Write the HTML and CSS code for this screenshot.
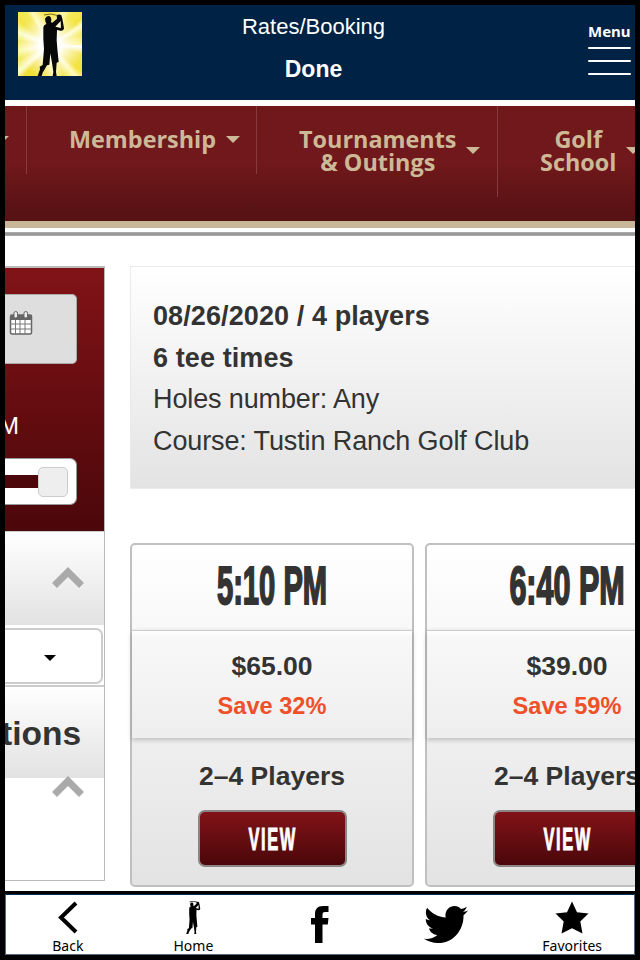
FILE: index.html
```html
<!DOCTYPE html>
<html lang="en">
<head>
  <meta charset="UTF-8" />
  <meta name="viewport" content="width=device-width, initial-scale=1.0"/>
  <title>Rates/Booking</title>
  <link rel="stylesheet" href="styles.css">
</head>
<body>
  <div class="app">
    <header class="top-bar">
      <div class="logo">
        <svg viewBox="0 0 192 192">
          <path d="M78 9l20-3 24 5" fill="none" stroke="#776d20" stroke-width="3"/>
          <path d="M81 20q5-10 14-7q7 5 4 18l4 1l14-12l-1-9q7-6 14-1l3 10l5 28q-1 9-10 8l-11-2l-1 31l2 25l4 40l-6 2l-2 28l2 12h-12l2-12l-4-28l-5-28l-3 34l-7 2l-13 22l-3 10H59l7-20l-1-8l9-5l4-48l-2-30v-35q1-8 9-10l-3-8zM128 27l-16 17l17 4z" fill="#080808" fill-rule="evenodd"/>
        </svg>
      </div>
      <div class="title">
        <h1>Rates/Booking</h1>
        <a class="done">Done</a>
      </div>
      <div class="menu">
        <span>Menu</span>
        <i></i><i></i><i></i>
      </div>
    </header>

    <div class="page">
      <nav class="site-nav">
        <div class="nav-item first"><b class="caret"></b></div>
        <div class="nav-item membership"><span>Membership</span><b class="caret"></b></div>
        <div class="nav-item outings"><span>Tournaments<br>&amp; Outings</span><b class="caret"></b></div>
        <div class="nav-item school"><span>Golf<br>School</span><b class="caret"></b></div>
      </nav>
      <div class="rule"></div>

      <main>
        <aside class="sidebar">
          <div class="filters">
            <div class="date-field">
              <svg width="24" height="26" viewBox="0 0 24 26">
                <rect x="1.500" y="5" width="21" height="19" rx="1.500" fill="#fff" stroke="#666" stroke-width="1.500"/>
                <path d="M1.500 5h21v5h-21z" fill="#666"/>
                <path d="M6.500 10v14M11 10v14M16 10v14M1.500 14h21M1.500 19h21" stroke="#777" stroke-width="1"/>
                <rect x="5" y="1.500" width="3.500" height="6.500" rx="1.700" fill="#eee" stroke="#666"/>
                <rect x="15" y="1.500" width="3.500" height="6.500" rx="1.700" fill="#eee" stroke="#666"/>
              </svg>
            </div>
            <div class="time">M</div>
            <div class="slider"><div class="track"></div><div class="handle"></div></div>
          </div>
          <div class="panel">
            <svg class="chevron" viewBox="0 0 32 21"><path d="M2.500 18.500L16 5l13.500 13.500" /></svg>
          </div>
          <div class="select"><b></b></div>
          <div class="panel options">
            <h2>tions</h2>
          </div>
          <div class="panel-body">
            <svg class="chevron" viewBox="0 0 32 21"><path d="M2.500 18.500L16 5l13.500 13.500" /></svg>
          </div>
        </aside>

        <section class="results">
          <div class="summary">
            <strong>08/26/2020 / 4 players</strong>
            <strong>6 tee times</strong>
            <span>Holes number: Any</span>
            <span>Course: Tustin Ranch Golf Club</span>
          </div>
          <div class="cards">
            <article class="card">
              <div class="tee-time"><span>5:10 PM</span></div>
              <div class="price">
                <strong>$65.00</strong>
                <em>Save 32%</em>
              </div>
              <div class="players">2–4 Players</div>
              <a class="view"><span>VIEW</span></a>
            </article>
            <article class="card">
              <div class="tee-time wide"><span>6:40 PM</span></div>
              <div class="price">
                <strong>$39.00</strong>
                <em>Save 59%</em>
              </div>
              <div class="players">2–4 Players</div>
              <a class="view"><span>VIEW</span></a>
            </article>
          </div>
        </section>
      </main>
    </div>

    <footer class="tab-bar">
      <a class="tab">
        <svg width="20" height="33" viewBox="0 0 20 33"><path d="M18 2L3 16.500L18 31" fill="none" stroke="#000" stroke-width="4"/></svg>
        <span>Back</span>
      </a>
      <a class="tab">
        <svg width="15" height="33" viewBox="58 4 84 188" preserveAspectRatio="none">
          <path d="M78 9l20-3 24 5" fill="none" stroke="#000" stroke-width="4"/>
          <path d="M81 20q5-10 14-7q7 5 4 18l4 1l14-12l-1-9q7-6 14-1l3 10l5 28q-1 9-10 8l-11-2l-1 31l2 25l4 40l-6 2l-2 28l2 12h-12l2-12l-4-28l-5-28l-3 34l-7 2l-13 22l-3 10H59l7-20l-1-8l9-5l4-48l-2-30v-35q1-8 9-10l-3-8zM128 27l-16 17l17 4z" fill-rule="evenodd"/>
        </svg>
        <span>Home</span>
      </a>
      <a class="tab social">
        <svg width="18" height="37" viewBox="0 0 18 37"><path d="M4 37V18.500H0V12h4V8.500C4 3 6.500 0 12 0h5.500v6H14c-2 0-2.500 1-2.500 3v3h6l-.7 6.500h-5.300V37z"/></svg>
      </a>
      <a class="tab social">
        <svg width="44" height="37" viewBox="0 48 512 416" preserveAspectRatio="none"><path d="M459.37 151.716c.325 4.548.325 9.097.325 13.645 0 138.72-105.583 298.558-298.558 298.558-59.452 0-114.68-17.219-161.137-47.106 8.447.974 16.568 1.299 25.34 1.299 49.055 0 94.213-16.568 130.274-44.832-46.132-.975-84.792-31.188-98.112-72.772 6.498.974 12.995 1.624 19.818 1.624 9.421 0 18.843-1.3 27.614-3.573-48.081-9.747-84.143-51.98-84.143-102.985v-1.299c13.969 7.797 30.214 12.67 47.431 13.319-28.264-18.843-46.781-51.005-46.781-87.391 0-19.492 5.197-37.36 14.294-52.954 51.655 63.675 129.3 105.258 216.365 109.807-1.624-7.797-2.599-15.918-2.599-24.04 0-57.828 46.782-104.934 104.934-104.934 30.213 0 57.502 12.67 76.67 33.137 23.715-4.548 46.456-13.32 66.599-25.34-7.798 24.366-24.366 44.833-46.132 57.827 21.117-2.273 41.584-8.122 60.426-16.243-14.292 20.791-32.161 39.308-52.628 54.253z"/></svg>
      </a>
      <a class="tab favorites">
        <svg width="34" height="33" viewBox="0 0 34 33"><path d="M17 0.500l5 10.800 11.500 1.300-8.200 8 2.200 11.900L17 27.200 6.500 32.500l2.200-11.900-8.200-8L12 11.300z"/></svg>
        <span>Favorites</span>
      </a>
    </footer>
  </div>
</body>
</html>
```

FILE: styles.css
```css
* {
  margin: 0;
  padding: 0;
  box-sizing: border-box;
}

body {
  font-family: "Liberation Sans", Arial, sans-serif;
  background: #000;
  color: #333;
}

svg {
  display: block;
}

.app {
  width: 640px;
  height: 960px;
  padding: 5px;
  overflow: hidden;
  display: flex;
  flex-direction: column;
}

/* top bar */
.top-bar {
  height: 95px;
  background: #002244;
  color: #fff;
  display: grid;
  grid-template-columns: 64px 1fr 43px;
  padding: 7px 4px 0 13px;
}

.logo {
  width: 64px;
  height: 64px;
  background:
    radial-gradient(circle at 50% 52%, #fff 22%, rgba(255, 255, 255, 0.5) 45%, rgba(255, 255, 255, 0) 72%),
    conic-gradient(from 8deg at 50% 52%, #f3e545, #fffbb8 14deg, #f5e95c 25deg, #f2e344 42deg, #fffcd0 50deg, #f5ea60 62deg, #fdf69a 80deg, #fff 84deg, #f4e654 98deg, #f2e23c 122deg, #fffbc0 132deg, #f4e858 148deg, #fdf7a5 166deg, #f4e650 180deg, #f0de30 212deg, #fffcd2 222deg, #f4e755 238deg, #fff9ae 252deg, #f5e95c 270deg, #fffcd0 284deg, #f3e447 300deg, #f5e95c 316deg, #fffbc0 324deg, #f4e650 340deg, #f3e545);
}

.title {
  display: flex;
  flex-direction: column;
  align-items: center;
  padding: 1px 43px 0 0;
}

.title h1 {
  font-size: 22px;
  font-weight: normal;
  line-height: 28px;
}

.done {
  font-size: 23px;
  font-weight: bold;
  line-height: 28px;
  margin-top: 14px;
}

.menu {
  display: flex;
  flex-direction: column;
  gap: 11px;
  font: bold 15px/20px "Noto Sans", sans-serif;
  padding-top: 9px;
}

.menu span {
  margin-bottom: -5px;
}

.menu i {
  height: 2px;
  background: #fff;
  border-radius: 1px;
}

/* club site */
.page {
  height: 791px;
  background: #fff;
  padding-top: 6px;
  overflow: hidden;
}

.site-nav {
  height: 122px;
  display: flex;
  align-items: flex-start;
  background: linear-gradient(#70191b, #70181b 50%, #541113);
  border-bottom: 7px solid #c9b799;
  overflow: hidden;
}

.nav-item {
  height: 68px;
  flex: none;
  display: flex;
  align-items: flex-start;
  padding-top: 22px;
  border-right: 1px solid #853b3e;
  color: #cdb998;
  font: bold 23.4px/23.4px "Open Sans", sans-serif;
  text-align: center;
}

.caret {
  border: 7px solid transparent;
  border-top-color: #cdb998;
  border-bottom: 0;
  margin-top: 8px;
}

.first {
  width: 22px;
}

.first .caret {
  margin-left: -10px;
}

.membership {
  width: 230px;
  padding-left: 42px;
  gap: 10px;
}

.outings {
  width: 241px;
  height: 91px;
  padding-left: 42px;
  gap: 10px;
}

.school {
  width: 230px;
  height: 91px;
  padding-left: 42px;
  gap: 10px;
}

.outings .caret,
.school .caret {
  margin-top: 19px;
}

.rule {
  height: 4px;
  margin-top: 4px;
  background: #999;
  border: solid #aaa;
  border-width: 1px 0;
}

main {
  display: flex;
  gap: 25px;
  margin-top: 30px;
}

/* filters column */
.sidebar {
  width: 100px;
  height: 615px;
  flex: none;
  border: 1px solid #bbb;
  border-left: 0;
  border-top-width: 2px;
  overflow: hidden;
}

.filters {
  height: 263px;
  padding: 26px 28px 0 0;
  background: linear-gradient(#811317, #4b070a);
}

.date-field {
  width: 72px;
  height: 70px;
  padding: 15px 0 0 4px;
  background: #dedede;
  border: 1px solid #aaa;
  border-left: 0;
  border-radius: 0 5px 5px 0;
}

.time {
  margin: 48px 0 0 -6px;
  color: #fff;
  font-size: 24px;
  line-height: 28px;
}

.slider {
  width: 72px;
  height: 47px;
  margin-top: 18px;
  display: flex;
  align-items: center;
  background: #fff;
  border: 1px solid #999;
  border-left: 0;
  border-radius: 0 7px 7px 0;
  padding-right: 8px;
}

.track {
  flex: 1;
  height: 13px;
  background: #4b070a;
}

.handle {
  width: 30px;
  height: 30px;
  background: #eee;
  border: 1px solid #ccc;
  border-radius: 5px;
}

.panel {
  height: 94px;
  border-top: 1px solid #ccc;
  background: linear-gradient(#fff, #e2e2e2);
}

.chevron {
  width: 32px;
  height: 21px;
  margin-left: 47px;
  fill: none;
  stroke: #aaa;
  stroke-width: 7;
}

.panel .chevron {
  margin-top: 35px;
}

.select {
  height: 56px;
  margin: 3px 1px 1px 0;
  display: flex;
  align-items: center;
  padding: 3px 0 0 39px;
  border: 2px solid #ccc;
  border-left: 0;
  border-radius: 0 7px 7px 0;
}

.select b {
  border: 6px solid transparent;
  border-top-color: #000;
  border-bottom: 0;
}

.options {
  height: 93px;
  border-top: 2px solid #ccc;
}

.options h2 {
  font-size: 33.5px;
  line-height: 38px;
  margin: 28px 0 0 -4px;
}

.panel-body {
  margin-top: -2px;
}

/* results */
.results {
  width: 580px;
  flex: none;
}

.summary {
  height: 223px;
  padding: 29px 22px 0;
  display: flex;
  flex-direction: column;
  border: 1px solid #eaeaea;
  background: linear-gradient(#fff, #e3e3e3);
  font-size: 27px;
  line-height: 41.7px;
}

.summary strong {
  letter-spacing: 0.1px;
}

.summary span {
  letter-spacing: -0.12px;
}

.cards {
  display: flex;
  gap: 11px;
  margin-top: 54px;
}

.card {
  width: 284px;
  height: 344px;
  display: flex;
  flex-direction: column;
  align-items: center;
  border: 2px solid #c0c0c0;
  border-radius: 5px;
  background: linear-gradient(#fff, #e3e3e3);
  font-weight: bold;
}

.tee-time {
  height: 85px;
  padding-top: 8px;
  font-size: 54px;
  line-height: 64px;
}

.tee-time span,
.view span {
  display: inline-block;
  transform: scaleX(0.54);
  -webkit-text-stroke: 2px;
}

.tee-time.wide span {
  transform: scaleX(0.565);
}

.price {
  width: 280px;
  height: 108px;
  display: flex;
  flex-direction: column;
  align-items: center;
  padding-top: 16px;
  border-top: 1px solid #ccc;
  background: linear-gradient(#fff, #f8f8f8 5%, #eee);
  box-shadow: 0 2px 5px rgba(0, 0, 0, 0.22);
}

.price strong {
  font-size: 26.5px;
  line-height: 38px;
}

.price em {
  color: #ee5029;
  font-size: 23.6px;
  font-style: normal;
  line-height: 43px;
}

.players {
  font-size: 26.5px;
  line-height: 30px;
  margin-top: 23px;
}

.view {
  width: 149px;
  height: 57px;
  margin-top: 19px;
  border: 2px solid #8c8585;
  border-radius: 7px;
  background: linear-gradient(#811317, #4b070a);
  color: #fff;
  font-size: 31px;
  line-height: 55px;
  text-align: center;
}

.view span {
  letter-spacing: 3px;
  margin-right: -1px;
  transform: scaleX(0.53);
  -webkit-text-stroke: 1px;
}

/* bottom tabs */
.tab-bar {
  height: 61px;
  margin-top: 3px;
  flex: none;
  display: grid;
  grid-template-columns: repeat(5, 1fr);
  background: #fff;
  border: 1px solid #536780;
  border-top-color: #002a5c;
}

.tab {
  display: flex;
  flex-direction: column;
  align-items: center;
  padding: 6px 2px 0 0;
  color: #000;
  font: 14px/20px "Noto Sans", sans-serif;
}

.tab span {
  margin-top: 2px;
}

.social {
  padding: 11px 0 0;
}

.favorites {
  padding: 6px 0 0 2px;
}
```
